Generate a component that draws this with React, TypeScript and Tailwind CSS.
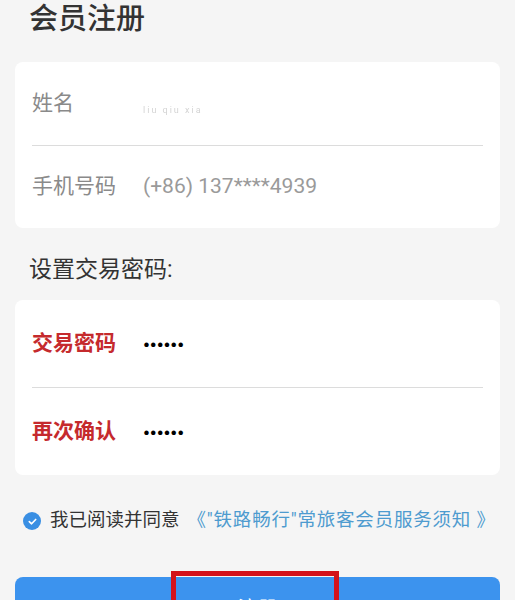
export default function App() {
  return (
    <div className="h-[600px] overflow-hidden bg-[#f5f5f5] font-['Roboto','Noto_Sans_CJK_SC',sans-serif]">
      {/* Title */}
      <h1 className="pl-[29px] pt-[1px] text-[29px] leading-[36px] font-medium text-[#333]">会员注册</h1>

      {/* Basic info card */}
      <div className="mx-[15px] mt-[25px] rounded-[8px] bg-white">
        <div className="flex h-[83px] items-center px-[17px]">
          <span className="w-[111px] text-[21px] text-[#8a8a8a]">姓名</span>
          <span className="mt-[14px] text-[9px] tracking-[2px] text-[#d4d4d4] blur-[0.7px]">liu qiu xia</span>
        </div>
        <div className="mx-[17px] h-px bg-[#dcdcdc]" />
        <div className="flex h-[82px] items-center px-[17px]">
          <span className="w-[111px] text-[21px] text-[#8a8a8a]">手机号码</span>
          <span className="text-[21px] text-[#9a9a9a]">(+86) 137****4939</span>
        </div>
      </div>

      {/* Password section */}
      <h2 className="mt-[24px] pl-[29px] text-[23px] leading-[36px] text-[#333]">设置交易密码:</h2>
      <div className="mx-[15px] mt-[12px] rounded-[8px] bg-white">
        <div className="flex h-[87px] items-center px-[17px]">
          <span className="w-[111px] text-[21px] font-semibold text-[#c52a2d]">交易密码</span>
          <span className="mt-[3px] text-[19px] font-bold leading-none text-black">••••••</span>
        </div>
        <div className="mx-[17px] h-px bg-[#dcdcdc]" />
        <div className="flex h-[87px] items-center px-[17px]">
          <span className="w-[111px] text-[21px] font-semibold text-[#c52a2d]">再次确认</span>
          <span className="mt-[3px] text-[19px] font-bold leading-none text-black">••••••</span>
        </div>
      </div>

      {/* Agreement */}
      <div className="mt-[32px] flex h-[28px] items-center pl-[23px]">
        <span className="flex h-[18px] w-[18px] items-center justify-center rounded-full bg-[#3a8fe3]">
          <svg viewBox="0 0 12 12" className="h-[11px] w-[11px]" fill="none">
            <path d="M2.5 6.2 L5 8.5 L9.5 3.8" stroke="white" strokeWidth="1.8" strokeLinecap="round" strokeLinejoin="round" />
          </svg>
        </span>
        <span className="ml-[9px] text-[18.5px] text-[#333]">我已阅读并同意</span>
        <span className="ml-[8px] text-[18.5px] tracking-[0.8px] text-[#4e9bcf]">《"铁路畅行"常旅客会员服务须知 》</span>
      </div>

      {/* Submit button */}
      <div className="relative mx-[15px] mt-[42px] flex h-[64px] items-center justify-center rounded-[8px] bg-[#3c93ee]">
        <span className="text-[20px] text-white">注册</span>
        <div className="absolute left-[156px] top-[-6px] h-[76px] w-[168px] border-[5px] border-[#d3121b]" />
      </div>
    </div>
  )
}
